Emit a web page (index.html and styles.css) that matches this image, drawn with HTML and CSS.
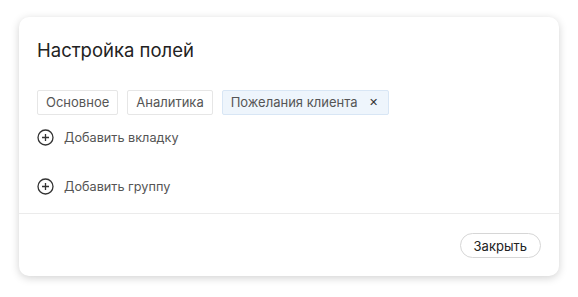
FILE: index.html
```html
<!DOCTYPE html>
<html lang="ru">
<head>
    <meta charset="UTF-8">
    <title>Настройка полей</title>
    <link rel="stylesheet" href="styles.css">
</head>
<body>
<div class="modal">
    <div class="modal-body">
        <h1>Настройка полей</h1>
        <div class="tabs">
            <span class="tab">Основное</span>
            <span class="tab">Аналитика</span>
            <span class="tab active">Пожелания клиента <span class="close">&#x2715;</span></span>
        </div>
        <div class="add-link add-tab">
            <svg width="17" height="17" viewBox="0 0 17 17"><circle cx="8.5" cy="8.5" r="7.5" fill="none" stroke="#333" stroke-width="1.3"/><path d="M8.5 5v7M5 8.5h7" stroke="#333" stroke-width="1.3"/></svg>
            Добавить вкладку
        </div>
        <div class="add-link add-group">
            <svg width="17" height="17" viewBox="0 0 17 17"><circle cx="8.5" cy="8.5" r="7.5" fill="none" stroke="#333" stroke-width="1.3"/><path d="M8.5 5v7M5 8.5h7" stroke="#333" stroke-width="1.3"/></svg>
            Добавить группу
        </div>
    </div>
    <div class="modal-footer">
        <button class="button">Закрыть</button>
    </div>
</div>
</body>
</html>
```

FILE: styles.css
```css
body {
    margin: 0;
    padding: 17px 19px;
    background: #fff;
    font-family: Inter, "Noto Sans", sans-serif;
    color: #333;
}
.modal {
    width: 540px;
    height: 259px;
    background: #fff;
    border-radius: 10px;
    box-shadow: 0 2px 8px rgba(0, 0, 0, 0.18);
    display: flex;
    flex-direction: column;
}
.modal-body {
    padding: 21px 18px 0;
    flex: 1;
    border-bottom: 1px solid #ebebeb;
}
h1 {
    margin: 0;
    font-size: 18.5px;
    font-weight: 400;
    line-height: 24px;
    color: #222;
}
.tabs {
    display: flex;
    gap: 9px;
    margin-top: 28px;
}
.tab {
    height: 25px;
    box-sizing: border-box;
    padding: 0 8px;
    border: 1px solid #e6e6e6;
    border-radius: 2px;
    font-size: 13px;
    line-height: 23px;
    color: #555;
    display: flex;
    align-items: center;
}
.tab.active {
    background: #eef5fc;
    border-color: #d8e6f5;
    padding-right: 8px;
}
.close {
    font-size: 11px;
    margin-left: 11px;
    margin-right: 2px;
    color: #333;
}
.add-link {
    display: flex;
    align-items: center;
    gap: 10px;
    font-size: 12.7px;
    color: #555;
    height: 24px;
}
.add-tab {
    margin-top: 10px;
}
.add-group {
    margin-top: 25px;
}
.modal-footer {
    display: flex;
    justify-content: flex-end;
    padding: 19px 18px 18px;
}
.button {
    height: 25px;
    padding: 0 13px;
    border: 1px solid #d6d6d6;
    border-radius: 13px;
    background: #fff;
    font-family: inherit;
    font-size: 13px;
    color: #222;
}
```
